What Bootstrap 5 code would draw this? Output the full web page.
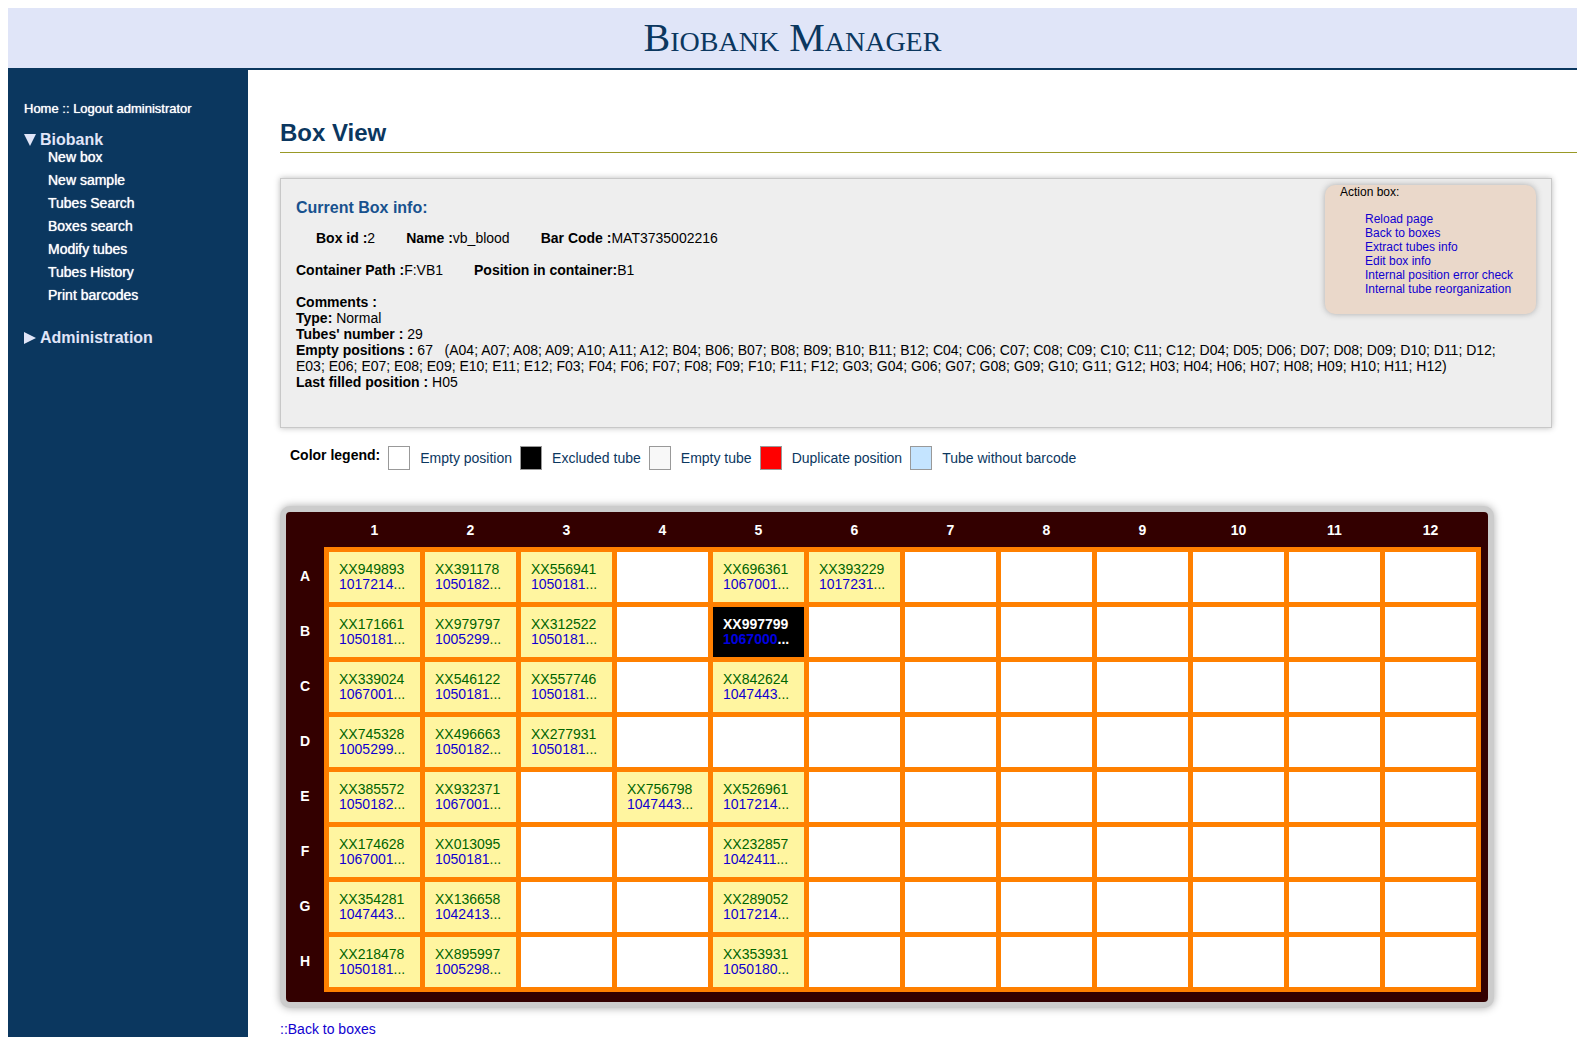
<!DOCTYPE html>
<html lang="en">
<head>
<meta charset="utf-8">
<meta name="viewport" content="width=device-width, initial-scale=1">
<title>Biobank Manager</title>
<link href="https://cdn.jsdelivr.net/npm/bootstrap@5.3.0/dist/css/bootstrap.min.css" rel="stylesheet">
<style>
  body { font: 14px/16px "Liberation Sans", Arial, sans-serif; color: #000; background: #fff; }
  a { color: #1000d0; text-decoration: none; }
  a:hover { text-decoration: underline; }
  .site-header { height: 62px; background: #e0e5f8; border-bottom: 2px solid #0b375f; }
  .site-title { font: 40px/44px "Liberation Serif", "Times New Roman", serif; font-variant: small-caps; color: #0b375f; }
  .side { width: 240px; background: #0b375f; padding: 30px 16px 0; color: #fff; text-shadow: 0 0 1px #fff; }
  .side a { color: #fff; }
  .session { font-size: 13px; line-height: 18px; margin-bottom: 13px; }
  .menu-head { font-size: 16px; line-height: 17px; font-weight: bold; color: #e0e5f8; background: none; border: 0; padding: 0; gap: 4px; text-shadow: none; }
  .menu-items { padding-left: 24px; margin-bottom: 25px; line-height: 18px; }
  .menu-items li { margin-bottom: 5px; }
  .content-area { padding: 49px 0 0 32px; }
  .page-title { font-size: 24px; line-height: 28px; font-weight: bold; color: #0b375f; padding-bottom: 5px; margin-bottom: 25px; border-bottom: 1px solid #999926; }
  .info-panel { min-height: 250px; margin-right: 25px; padding: 0 15px; background: #eee; border: 1px solid #c8c8c8; box-shadow: 0 0 6px #bbb; }
  .info-title { font-size: 16px; line-height: 18px; font-weight: bold; color: #18528e; padding-top: 20px; margin-bottom: 13px; }
  .field-row { gap: 31px; margin-bottom: 16px; }
  .field-indent { padding-left: 20px; }
  .position-list { padding-right: 20px; }
  .action-box { width: 211px; height: 129px; margin: 6px 0 0; padding: 0 0 0 15px; background: #ead8ca; border-radius: 10px; box-shadow: 0 0 6px #aaa; font-size: 12px; line-height: 14px; }
  .action-box ul { padding-left: 25px; margin-top: 13px; }
  .legend-row { padding: 18px 0 0 10px; margin-bottom: 36px; }
  .legend-row dt { padding-top: 1px; }
  .legend-row dd { color: #0b375f; gap: 10px; }
  .swatch { width: 22px; height: 24px; border: 1px solid #999; flex: none; }
  .tray { max-width: 100%; padding: 0 7px 10px 0; background: #300; border: 6px solid #ccc; border-radius: 10px; box-shadow: 0 0 8px #aaa; overflow-x: auto; }
  .rack { border-collapse: separate; border-spacing: 5px; line-height: 15px; }
  .rack th { color: #fff; text-align: center; min-width: 33px; height: 30px; }
  .rack thead th { padding-bottom: 4px; }
  .rack tbody th { padding: 0 5px 2px 0; }
  .rack td { min-width: 91px; height: 50px; padding: 0 10px 1px; background: #fff; box-shadow: 0 0 0 5px #ff8000; color: #006400; }
  .rack td.tube { background: #fff5a0; }
  .rack td.excluded { background: #000; color: #fff; font-weight: bold; }
  .rack td.excluded a { color: #0000e0; }
  .back-link { margin-top: 14px; line-height: 15px; }
</style>
</head>
<body class="p-2">
<header class="site-header d-flex justify-content-center pt-2">
  <h1 class="site-title m-0">Biobank Manager</h1>
</header>
<div class="d-flex align-items-stretch">
  <nav class="side flex-shrink-0" aria-label="Main menu">
    <div class="session"><a href="#">Home</a> :: <a href="#">Logout administrator</a></div>
    <button type="button" class="menu-head d-flex align-items-center" aria-expanded="true">
      <svg width="12" height="12" viewBox="0 0 12 12" aria-hidden="true"><path d="M0 0h12L6 12z" fill="currentColor"/></svg>Biobank
    </button>
    <ul class="menu-items list-unstyled">
      <li><a href="#">New box</a></li>
      <li><a href="#">New sample</a></li>
      <li><a href="#">Tubes Search</a></li>
      <li><a href="#">Boxes search</a></li>
      <li><a href="#">Modify tubes</a></li>
      <li><a href="#">Tubes History</a></li>
      <li><a href="#">Print barcodes</a></li>
    </ul>
    <button type="button" class="menu-head d-flex align-items-center" aria-expanded="false">
      <svg width="12" height="12" viewBox="0 0 12 12" aria-hidden="true"><path d="M0 0v12l12-6z" fill="currentColor"/></svg>Administration
    </button>
  </nav>
  <main class="content-area flex-grow-1">
    <h2 class="page-title">Box View</h2>
    <section class="info-panel">
      <aside class="action-box float-end">
        <div>Action box:</div>
        <ul class="list-unstyled">
          <li><a href="#">Reload page</a></li>
          <li><a href="#">Back to boxes</a></li>
          <li><a href="#">Extract tubes info</a></li>
          <li><a href="#">Edit box info</a></li>
          <li><a href="#">Internal position error check</a></li>
          <li><a href="#">Internal tube reorganization</a></li>
        </ul>
      </aside>
      <h3 class="info-title">Current Box info:</h3>
      <div class="field-row field-indent d-flex">
        <div><b>Box id :</b>2</div>
        <div><b>Name :</b>vb_blood</div>
        <div><b>Bar Code :</b>MAT3735002216</div>
      </div>
      <div class="field-row d-flex">
        <div><b>Container Path :</b>F:VB1</div>
        <div><b>Position in container:</b>B1</div>
      </div>
      <div><b>Comments :</b></div>
      <div><b>Type:</b> Normal</div>
      <div><b>Tubes' number :</b> 29</div>
      <div class="position-list"><b>Empty positions :</b> 67 &nbsp; (A04; A07; A08; A09; A10; A11; A12; B04; B06; B07; B08; B09; B10; B11; B12; C04; C06; C07; C08; C09; C10; C11; C12; D04; D05; D06; D07; D08; D09; D10; D11; D12; <span>E03; E06; E07; E08; E09; E10; E11; E12; F03; F04; F06; F07; F08; F09; F10; F11; F12; G03; G04; G06; G07; G08; G09; G10; G11; G12; H03; H04; H06; H07; H08; H09; H10; H11; H12)</span></div>
      <div><b>Last filled position :</b> H05</div>
    </section>
    <dl class="legend-row d-flex flex-wrap gap-2">
      <dt>Color legend:</dt>
      <dd class="d-flex align-items-center m-0"><span class="swatch bg-white"></span>Empty position</dd>
      <dd class="d-flex align-items-center m-0"><span class="swatch bg-black"></span>Excluded tube</dd>
      <dd class="d-flex align-items-center m-0"><span class="swatch" style="background:#f8f8f8"></span>Empty tube</dd>
      <dd class="d-flex align-items-center m-0"><span class="swatch" style="background:#f00"></span>Duplicate position</dd>
      <dd class="d-flex align-items-center m-0"><span class="swatch" style="background:#c4e4ff"></span>Tube without barcode</dd>
    </dl>
    <div class="tray d-inline-block align-top">
      <table class="rack">
        <thead><tr id="rackHead"><th></th></tr></thead>
        <tbody id="rackBody"></tbody>
      </table>
    </div>
    <div class="back-link"><a href="#">::Back to boxes</a></div>
  </main>
</div>
<script src="https://cdn.jsdelivr.net/npm/bootstrap@5.3.0/dist/js/bootstrap.bundle.min.js"></script>
<script>
  // Filled positions: row letter -> { column: [sample, barcode prefix] }
  const tubes = {
    A: {1:['XX949893','1017214'],2:['XX391178','1050182'],3:['XX556941','1050181'],5:['XX696361','1067001'],6:['XX393229','1017231']},
    B: {1:['XX171661','1050181'],2:['XX979797','1005299'],3:['XX312522','1050181'],5:['XX997799','1067000','excluded']},
    C: {1:['XX339024','1067001'],2:['XX546122','1050181'],3:['XX557746','1050181'],5:['XX842624','1047443']},
    D: {1:['XX745328','1005299'],2:['XX496663','1050182'],3:['XX277931','1050181']},
    E: {1:['XX385572','1050182'],2:['XX932371','1067001'],4:['XX756798','1047443'],5:['XX526961','1017214']},
    F: {1:['XX174628','1067001'],2:['XX013095','1050181'],5:['XX232857','1042411']},
    G: {1:['XX354281','1047443'],2:['XX136658','1042413'],5:['XX289052','1017214']},
    H: {1:['XX218478','1050181'],2:['XX895997','1005298'],5:['XX353931','1050180']}
  };
  const columns = Array.from({length: 12}, (_, i) => i + 1);
  document.getElementById('rackHead').innerHTML += columns.map(c => `<th scope="col">${c}</th>`).join('');
  document.getElementById('rackBody').innerHTML = Object.entries(tubes).map(([row, cells]) =>
    `<tr><th scope="row">${row}</th>` + columns.map(c => {
      const t = cells[c];
      return t ? `<td class="${t[2] || 'tube'}"><span>${t[0]}</span><br><a href="#">${t[1]}</a>...</td>` : '<td></td>';
    }).join('') + '</tr>').join('');
</script>
</body>
</html>
